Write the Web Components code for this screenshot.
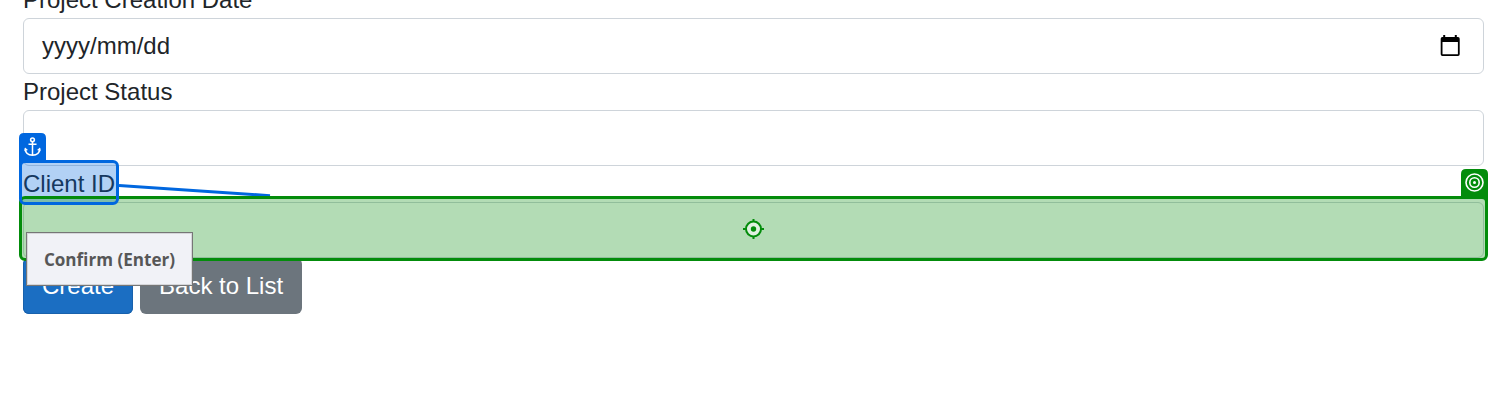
<!DOCTYPE html>
<html lang="en"><head><meta charset="utf-8"><title>Create project</title>
<style>html,body{margin:0;height:401px;overflow:hidden;background:#fff}body{font-family:"Liberation Sans",Arial,sans-serif;font-size:24px;line-height:36px;color:#212529}</style></head>
<body>
<project-form>
  <form-field label="Project Creation Date" type="date">yyyy/mm/dd</form-field>
  <form-field label="Project Status"></form-field>
  <form-field label="Client ID"></form-field>
  <form-button slot="actions" kind="primary">Create</form-button>
  <form-button slot="actions" kind="secondary">Back to List</form-button>
</project-form>
<pick-overlay></pick-overlay>
<hint-tip>Confirm (Enter)</hint-tip>
<script>
function define(name, html, setup){
  const t=document.createElement('template');t.innerHTML=html;
  customElements.define(name,class extends HTMLElement{
    constructor(){super();this.attachShadow({mode:'open'}).append(t.content.cloneNode(true));}
    connectedCallback(){if(setup)setup(this,this.shadowRoot);}
  });
}
define('project-form',`<style>
:host{display:flex;flex-direction:column;margin:-18px 23px 0}
.actions{display:flex;gap:7px}
</style><slot></slot><div class="actions"><slot name="actions"></slot></div>`);
define('form-field',`<style>
:host{display:block}
label{display:block;height:36px}
.box{box-sizing:border-box;height:56px;border:1px solid #ced4da;border-radius:6px;padding:9px 18px;display:flex;align-items:center;justify-content:space-between;background:#fff}
svg{display:none;margin-right:5px}
:host([type=date]) svg{display:block}
</style><label></label><div class="box"><span><slot></slot></span>
<svg width="20" height="22" viewBox="0 0 20 22"><path fill="#000" fill-rule="evenodd" d="M3.200 0h2v2h9.600V0h2v2h1.200Q19.700 2 19.700 3.700V19.300Q19.700 21 18 21H2.400Q.7 21 .7 19.300V3.700Q.7 2 2.400 2h.8zM2.500 7v12.200h15.400V7z"/></svg></div>`,
(el,root)=>{root.querySelector('label').textContent=el.getAttribute('label');});
define('form-button',`<style>
:host{display:block;box-sizing:border-box;height:56px;padding:10px 19px;border-radius:6px;color:#fff;background:#6c757d;white-space:nowrap}
:host([kind=primary]){background:#1b6ec2;box-shadow:inset 0 0 0 1px #1861ac}
</style><slot></slot>`);
define('pick-overlay',`<style>
:host{position:absolute;left:0;top:0;width:1507px;height:401px;pointer-events:none}
svg{display:block}
</style><svg width="1507" height="401" viewBox="0 0 1507 401" fill="none">
<rect x="20.500" y="161.500" width="97" height="42" rx="4.500" fill="#0067df" fill-opacity=".3"/>
<rect x="20.500" y="197.500" width="1466" height="62" rx="4.500" fill="#038c0b" fill-opacity=".3"/>
<path d="M119 185.500L270 195.700" stroke="#0067df" stroke-width="3"/>
<rect x="20.500" y="197.500" width="1466" height="62" rx="4.500" stroke="#038c0b" stroke-width="3"/>
<path fill="#038c0b" d="M1461 197v-23q0-5 5-5h17q5 0 5 5v28h-3v-3h-24z"/>
<rect x="20.500" y="161.500" width="97" height="42" rx="4.500" stroke="#0067df" stroke-width="3"/>
<path fill="#0067df" d="M19 167v-29q0-5 5-5h17q5 0 5 5v24H22v5z"/>
<g stroke="#fff" stroke-width="1.500"><circle cx="32.500" cy="139.800" r="1.900"/><path d="M32.500 141.700v13.500M28.500 144.200h8M25.200 148.500q.3 6.700 7.300 6.700t7.300-6.700"/></g>
<path fill="#fff" d="M24.300 151.200l.7-3.700 3 2.500zM40.700 151.200l-.7-3.700-3 2.500z"/>
<g stroke="#fff" stroke-width="1.600"><circle cx="1474.500" cy="182.500" r="8.500"/><circle cx="1474.500" cy="182.500" r="4.700"/></g><circle cx="1474.500" cy="182.500" r="1.500" fill="#fff"/>
<circle cx="753.500" cy="229" r="7.500" fill="#e0f1e1" stroke="#038c0b" stroke-width="2"/><circle cx="753.500" cy="229" r="2.700" fill="#038c0b"/>
<path stroke="#038c0b" stroke-width="2" d="M753.500 219v3M753.500 236v3M743 229h3M761 229h3"/>
</svg>`);
define('hint-tip',`<style>
:host{position:absolute;left:26px;top:232px;box-sizing:border-box;width:167px;height:54px;border:1px solid #767676;background:#f1f2f7;color:#575757;display:flex;align-items:center;justify-content:center;font:700 17.100px/24px "Open Sans","Noto Sans",sans-serif;white-space:nowrap;box-shadow:inset 0 0 0 1px #d5d6da}
span{padding-top:2px}
</style><span><slot></slot></span>`);
</script>
</body></html>
